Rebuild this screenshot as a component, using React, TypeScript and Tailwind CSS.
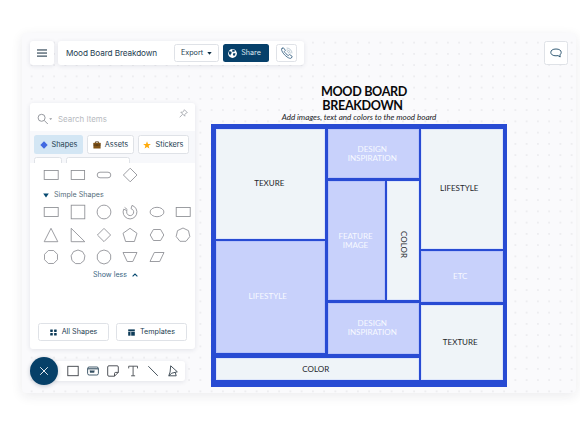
import type { ReactNode } from "react";

const card = "bg-white rounded-[3px] shadow-[0_1px_5px_rgba(30,40,70,0.11)]";
const outlined =
  "flex shrink-0 items-center justify-center rounded-[2.5px] border border-[#dfe2e7] bg-white text-[#1d3c50]";

function Poly({ points }: { points: string }) {
  return <polygon points={points} />;
}

function ngon(n: number, r: number, start = -90) {
  return Array.from({ length: n }, (_, i) => {
    const a = ((start + (360 / n) * i) * Math.PI) / 180;
    return `${(10 + r * Math.cos(a)).toFixed(2)},${(10 + r * Math.sin(a)).toFixed(2)}`;
  }).join(" ");
}

function ShapeRow({ shapes }: { shapes: ReactNode[] }) {
  return (
    <div className="grid grid-cols-[repeat(6,26.4px)]">
      {shapes.map((s, i) => (
        <div key={i} className="flex justify-center">
          <svg width="20" height="20" viewBox="0 0 20 20" fill="none" stroke="#8b8d92" strokeWidth="0.85">
            {s}
          </svg>
        </div>
      ))}
    </div>
  );
}

const rect = <rect x="3.2" y="5.5" width="14" height="9" />;

const recent = [
  rect,
  <rect x="3.2" y="5.5" width="13.4" height="9" />,
  <rect x="3.2" y="7.2" width="13.6" height="5.6" rx="2.8" />,
  <Poly points="10.2,3.2 17,10 10.2,16.8 3.4,10" />,
];
const rowOne = [
  rect,
  <rect x="3.2" y="3.2" width="13.6" height="13.6" />,
  <circle cx="10" cy="10" r="6.9" />,
  <path d="M12 3.4 A6.9 6.9 0 1 1 3.7 7.2 L7 8.6 A3.5 3.5 0 1 0 11 6.7 Z M4.6 5.4 L7.4 7.6" />,
  <ellipse cx="10" cy="10" rx="6.9" ry="4.7" />,
  rect,
];
const rowTwo = [
  <Poly points="10,3.3 16.8,16.7 3.2,16.7" />,
  <Poly points="3.2,3.3 16.8,16.7 3.2,16.7" />,
  <Poly points="10,3.4 16.6,10 10,16.6 3.4,10" />,
  <Poly points="10,3.3 17,8.3 14.4,16.5 5.6,16.5 3,8.3" />,
  <Poly points="6.4,4.5 13.6,4.5 16.8,10 13.6,15.5 6.4,15.5 3.2,10" />,
  <Poly points={ngon(7, 7)} />,
];
const rowThree = [
  <Poly points={ngon(8, 7, 22.5)} />,
  <Poly points={ngon(9, 7)} />,
  <Poly points={ngon(10, 7)} />,
  <Poly points="3,5.5 17,5.5 12.8,14.5 7.2,14.5" />,
  <Poly points="7.3,5.5 17,5.5 12.7,14.5 3,14.5" />,
];

function Header() {
  return (
    <div className="flex h-6 gap-1">
      <div className={`${card} flex w-6 items-center justify-center`}>
        <svg width="10" height="8" viewBox="0 0 10 8" fill="#60717d">
          <rect width="10" height="1.5" y="0.2" />
          <rect width="10" height="1.5" y="3.3" />
          <rect width="10" height="1.5" y="6.4" />
        </svg>
      </div>
      <div className={`${card} flex w-[246px] items-center pl-2`}>
        <div className="w-[108px] whitespace-nowrap text-[8.2px] tracking-[-0.1px] text-[#1d3c50]">Mood Board Breakdown</div>
        <div className={`${outlined} h-[18px] w-[45px] gap-[4px] text-[7.2px]`}>
          Export
          <svg width="5" height="3" viewBox="0 0 5 3" fill="#0b2c42"><path d="M0.3 0h4.4L2.5 2.8z" /></svg>
        </div>
        <div className="ml-1 flex h-[18px] w-[46px] items-center justify-center gap-1 rounded-[2.5px] bg-[#06406a] pr-[3px] text-[7.2px] text-[#dce8f0]">
          <svg width="9" height="9" viewBox="0 0 9 9">
            <circle cx="4.5" cy="4.5" r="4.4" fill="#fff" />
            <path d="M.8 2.2 3.2 2.6 3.8 4 2.7 5.2 2.3 6.5.9 4.8zM4.4.6 6.5.9 7 2.6 5.7 2.5 5.2 3.2 4.2 2.5zM5.3 4.2 7.5 4.3 7 6.2 5.8 7 4.9 5.5z" fill="#06406a" />
          </svg>
          Share
        </div>
        <div className={`${outlined} ml-[7px] h-[18px] w-[21px]`}>
          <svg width="12" height="12" viewBox="0 0 12 12" fill="none" stroke="#28567a" strokeWidth="0.8" strokeLinejoin="round" strokeLinecap="round">
            <path d="M1 1.5 2.4.8 4.4 3.3 3.3 4.5C4 6 5.7 7.7 7.3 8.5L8.6 7.5 11.2 9.4 10.4 11C9.8 11.8 7.8 11.2 6.1 10 3.7 8.3 1.4 5.6.7 3.3.5 2.4.6 1.8 1 1.5z" />
            <path d="M6 1a5 5 0 0 1 5 5M6 2.7a3.4 3.4 0 0 1 3.3 3.4M6 4.3a1.8 1.8 0 0 1 1.7 1.8" strokeWidth="0.5" stroke="#7d98ab" />
          </svg>
        </div>
      </div>
      <div className={`${outlined} ml-[236px] w-6`}>
        <svg width="12" height="10" viewBox="0 0 12 10" fill="none" stroke="#1d4967" strokeWidth="0.9">
          <path d="M6 1C2.8 1 .8 2.3.8 4.4S2.8 7.8 6 7.8c.7 0 1.4-.1 2-.2L10.2 9 9.9 6.9c.8-.6 1.3-1.5 1.3-2.5C11.2 2.3 9.2 1 6 1z" />
        </svg>
      </div>
    </div>
  );
}

function ShapePanel() {
  return (
    <div className={`${card} flex h-[246px] w-[165px] flex-col overflow-hidden`}>
      <div className="flex h-[28px] shrink-0 items-center pl-[7px]">
        <svg className="mt-[3px]" width="16" height="12" viewBox="0 0 16 12" fill="none" stroke="#96999f" strokeWidth="1">
          <circle cx="4.6" cy="4.8" r="3.5" />
          <path d="M7.2 7.4 10.8 11" />
          <path d="M12.2 5.2h3L13.7 7z" fill="#96999f" stroke="none" />
        </svg>
        <span className="ml-[5px] mt-[5px] w-[121px] whitespace-nowrap text-[7.9px] text-[#b7bac0]">Search Items</span>
        <svg className="mb-[8px] shrink-0" width="9" height="9" viewBox="0 0 9 9" fill="none" stroke="#8f949b" strokeWidth="0.7">
          <path d="M5.4.7 8.3 3.6 7.2 4 5.9 5.4 5.8 7.2 1.8 3.2 3.6 3.1 5 1.8zM3.6 5.3.7 8.3" />
        </svg>
      </div>
      <div className="h-8 shrink-0 overflow-hidden bg-[#f7f8fb] pl-1 pt-1">
        <div className="flex h-[19px] text-[7.4px] text-[#1d3c50]">
          <div className="flex w-[49px] items-center justify-center gap-1 rounded-[2.5px] bg-[#d3e6f4]">
            <svg width="8" height="8" viewBox="0 0 8 8"><path d="M4 .3 7.7 4 4 7.7.3 4z" fill="#4169e1" /></svg>
            Shapes
          </div>
          <div className={`${outlined} ml-1 w-[47px] gap-[4px]`}>
            <svg width="8" height="8" viewBox="0 0 8 8">
              <path d="M2.5 2V.8h3V2" fill="none" stroke="#513716" strokeWidth=".8" />
              <rect x=".4" y="1.8" width="7.2" height="5.7" rx=".5" fill="#815316" />
              <path d="M.4 4h7.2M4 3.5v1.3" stroke="#463116" strokeWidth=".8" />
            </svg>
            Assets
          </div>
          <div className={`${outlined} ml-1 w-[51px] gap-[4px]`}>
            <svg width="8" height="8" viewBox="0 0 8 8"><path d="M4 .2 5 2.9 7.9 3 5.6 4.8 6.4 7.6 4 6 1.6 7.6 2.4 4.8.1 3 3 2.9z" fill="#ffab0a" /></svg>
            Stickers
          </div>
        </div>
        <div className="mt-[3px] flex h-[18px] gap-1">
          <div className={`${outlined} w-[28px]`} />
          <div className={`${outlined} w-[64px]`} />
        </div>
      </div>
      <div className="flex grow flex-col pl-[8px] pt-[2px]">
        <ShapeRow shapes={recent} />
        <div className="flex h-[17px] items-center gap-[5px] pl-[5px] pt-[3px] text-[7.1px] text-[#526b79]">
          <svg width="6" height="5" viewBox="0 0 6 5"><path d="M.2.4h5.6L3 4.6z" fill="#064970" /></svg>
          <span>Simple Shapes</span>
        </div>
        <div className="flex flex-col gap-[2.6px]">
          <ShapeRow shapes={rowOne} />
          <ShapeRow shapes={rowTwo} />
          <ShapeRow shapes={rowThree} />
        </div>
        <div className="mt-[3px] flex items-center gap-[5px] pl-[55px] text-[7.1px] leading-[10px] text-[#386582]">
          Show less
          <svg width="6" height="4" viewBox="0 0 6 4" fill="none" stroke="#064970" strokeWidth="1.1"><path d="M.6 3.4 3 1 5.4 3.4" /></svg>
        </div>
      </div>
      <div className="flex shrink-0 gap-[7px] pb-[8px] pl-[8px] text-[7.2px]">
        <div className={`${outlined} h-[18px] w-[71px] gap-[5px]`}>
          <svg width="7" height="7" viewBox="0 0 7 7" fill="#0d3b58">
            <rect x=".2" y=".4" width="2.6" height="2.5" rx=".4" /><rect x="4.1" y=".4" width="2.6" height="2.5" rx=".4" />
            <rect x=".2" y="4.1" width="2.6" height="2.5" rx=".4" /><rect x="4.1" y="4.1" width="2.6" height="2.5" rx=".4" />
          </svg>
          All Shapes
        </div>
        <div className={`${outlined} h-[18px] w-[71px] gap-[5px]`}>
          <svg width="7" height="7" viewBox="0 0 7 7" fill="#0d3b58">
            <rect x=".2" y=".4" width="6.6" height="2" /><rect x=".2" y="3" width="2.3" height="3.7" /><rect x="3.2" y="3" width="3.6" height="3.7" />
          </svg>
          Templates
        </div>
      </div>
    </div>
  );
}

function Toolbar() {
  return (
    <div className="-mt-[0.5px] flex items-center">
      <div className="z-10 flex size-7 items-center justify-center rounded-full bg-[#064068] shadow-[0_1px_4px_rgba(20,40,70,0.25)]">
        <svg width="10" height="10" viewBox="0 0 10 10" stroke="#fff" strokeWidth="0.9"><path d="M1.2 1.2 8.8 8.8M8.8 1.2 1.2 8.8" /></svg>
      </div>
      <div className={`${card} -ml-1 flex h-5 w-[131px] items-center gap-2 pl-[13px]`}>
        <svg width="12" height="12" viewBox="0 0 12 12" fill="none" stroke="#3d4147" strokeWidth=".9"><rect x=".8" y="1.3" width="10.4" height="9.4" /></svg>
        <svg width="12" height="12" viewBox="0 0 12 12" fill="none" stroke="#334e60" strokeWidth=".9">
          <rect x=".6" y="2" width="10.8" height="8" rx="1.6" /><path d="M.6 3.8h10.8" strokeWidth="1.1" />
          <rect x="3" y="5.7" width="4.2" height="1.9" fill="#334e60" strokeWidth=".3" />
        </svg>
        <svg width="12" height="12" viewBox="0 0 12 12" fill="none" stroke="#3d4147" strokeWidth=".9" strokeLinejoin="round">
          <path d="M.7 2q0-1.2 1.2-1.2h8.2q1.2 0 1.2 1.2v5.4L7.5 11.2H1.9Q.7 11.2.7 10zM11.3 7.4H8.7Q7.5 7.4 7.5 8.6v2.6" />
        </svg>
        <svg width="12" height="12" viewBox="0 0 12 12" fill="none" stroke="#4a4e53" strokeWidth=".9"><path d="M1.7 3.4V1.2h8.8v2.2M6.1 1.2v9.6M4.1 10.8h4" /></svg>
        <svg width="12" height="12" viewBox="0 0 12 12" stroke="#34424d" strokeWidth=".9"><path d="M1.3 1.2 10.8 10.8" /></svg>
        <svg width="12" height="12" viewBox="0 0 12 12" fill="none" stroke="#34424d" strokeWidth=".9" strokeLinejoin="round">
          <path d="M3.7.8 10.3 6.8 4.8 8.2 1.8 10.8 3.1 7zM1.8 10.8H9.2L8.3 7.5" />
        </svg>
      </div>
    </div>
  );
}

const pale = "flex items-center justify-center border border-[#dce5fb] bg-[#eff4f8] text-[#24262b]";
const lilac = "flex items-center justify-center border border-[#b7c3fa] bg-[#c8d1fb] text-[#f7f9ff]";

function MoodBoard() {
  return (
    <div className="mt-[20px] w-[296px] text-center font-[Lato,sans-serif]">
      <div className="pl-[10px] text-[12.6px] font-bold leading-[13.7px] tracking-[-0.34px] text-[#09090b]">
        <div>MOOD BOARD</div>
        <div className="pr-[3px]">BREAKDOWN</div>
      </div>
      <div className="h-[12px] whitespace-nowrap text-[8.1px] italic leading-[10px] tracking-[-0.03px] text-[#222327]">
        Add images, text and colors to the mood board
      </div>
      <div className="flex h-[263px] gap-[2px] bg-[#284bd3] pb-[7px] pl-[4.5px] pr-[4.5px] pt-[4.5px] text-[8px] leading-[9px]">
        <div className="flex w-[203.5px] flex-col gap-1">
          <div className="flex h-[225px] gap-[2.5px]">
            <div className="flex w-[109.5px] flex-col gap-[2px] pb-px">
              <div className={`${pale} h-[110px] pr-[2px]`}>TEXURE</div>
              <div className={`${lilac} grow pr-[5px]`}>LIFESTYLE</div>
            </div>
            <div className="flex w-[91.5px] flex-col gap-[2.5px]">
              <div className={`${lilac} h-[49.5px] pr-[2px]`}>DESIGN<br />INSPIRATION</div>
              <div className="flex h-[119.5px] gap-[2.5px]">
                <div className={`${lilac} w-[57px] pr-px`}>FEATURE<br />IMAGE</div>
                <div className={`${pale} w-[32px] pt-[7px]`}><span className="[writing-mode:vertical-rl]">COLOR</span></div>
              </div>
              <div className={`${lilac} grow pr-[2px]`}>DESIGN<br />INSPIRATION</div>
            </div>
          </div>
          <div className={`${pale} grow pr-[3px]`}>COLOR</div>
        </div>
        <div className="flex w-[81.5px] flex-col gap-[2.5px]">
          <div className={`${pale} h-[120px] pr-[5px]`}>LIFESTYLE</div>
          <div className={`${lilac} h-[51px] pr-[3px]`}>ETC</div>
          <div className={`${pale} grow pr-[3px]`}>TEXTURE</div>
        </div>
      </div>
    </div>
  );
}

export default function App() {
  return (
    <div className="h-[433px] w-[580px] bg-white pl-[22px] pt-[33px] font-[Inter,sans-serif]">
      <div className="h-[360px] w-[554px] rounded-[4px] bg-[#fafafc] bg-[radial-gradient(circle,#ededf0_0.65px,transparent_1px)] bg-[size:11.25px_11.25px] bg-[position:4px_4px] pl-2 pt-2 shadow-[0_3px_12px_rgba(30,30,60,0.09)]">
        <Header />
        <div className="flex gap-4">
          <div className="mt-[38px] flex flex-col gap-2">
            <ShapePanel />
            <Toolbar />
          </div>
          <MoodBoard />
        </div>
      </div>
    </div>
  );
}
